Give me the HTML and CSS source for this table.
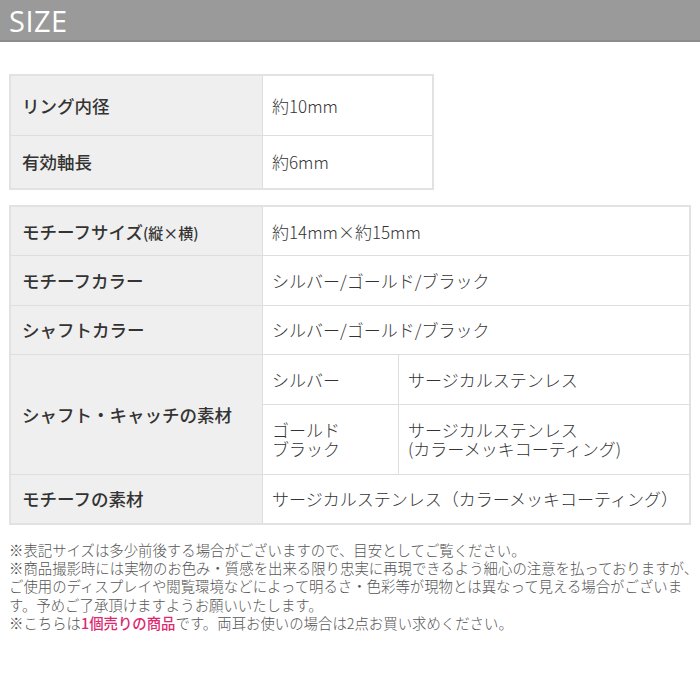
FILE: index.html
```html
<!DOCTYPE html>
<html lang="ja">
<head>
<meta charset="utf-8">
<link rel="stylesheet" href="styles.css">
</head>
<body>
<div class="header"><h1 class="title">SIZE</h1></div>
<div class="content">
  <table class="spec spec-small">
    <tr class="row-a"><th class="label">リング内径</th><td class="value">約10mm</td></tr>
    <tr class="row-b"><th class="label">有効軸長</th><td class="value">約6mm</td></tr>
  </table>
  <table class="spec spec-large">
    <tr class="row-std"><th class="label">モチーフサイズ<span class="small">(縦×横)</span></th><td class="value" colspan="2">約14mm×約15mm</td></tr>
    <tr class="row-std"><th class="label">モチーフカラー</th><td class="value" colspan="2">シルバー/ゴールド/ブラック</td></tr>
    <tr class="row-std"><th class="label">シャフトカラー</th><td class="value" colspan="2">シルバー/ゴールド/ブラック</td></tr>
    <tr class="row-std"><th class="label" rowspan="2">シャフト・キャッチの素材</th><td class="value sub">シルバー</td><td class="value">サージカルステンレス</td></tr>
    <tr class="row-tall"><td class="value sub">ゴールド<br>ブラック</td><td class="value">サージカルステンレス<br>(カラーメッキコーティング)</td></tr>
    <tr class="row-std"><th class="label">モチーフの素材</th><td class="value" colspan="2">サージカルステンレス（カラーメッキコーティング）</td></tr>
  </table>
  <div class="notes">
    <p class="note">※表記サイズは多少前後する場合がございますので、目安としてご覧ください。</p>
    <p class="note">※商品撮影時には実物のお色み・質感を出来る限り忠実に再現できるよう細心の注意を払っておりますが、<br>ご使用のディスプレイや閲覧環境などによって明るさ・色彩等が現物とは異なって見える場合がございま<br>す。予めご了承頂けますようお願いいたします。</p>
    <p class="note">※こちらは<strong class="accent">1個売りの商品</strong>です。両耳お使いの場合は2点お買い求めください。</p>
  </div>
</div>
</body>
</html>
```
FILE: styles.css
```css
html, body {
  margin: 0;
  padding: 0;
  background: #fff;
}
body {
  width: 700px;
  font-family: "Open Sans", "Noto Sans CJK JP", sans-serif;
  color: #333;
}
.header {
  height: 40px;
  background: #9a9a9a;
  border-bottom: 2px solid #8c8c8c;
  display: flex;
  align-items: center;
  padding-left: 9px;
}
.title {
  margin: 0;
  font-family: "Open Sans", sans-serif;
  font-weight: 400;
  font-size: 29px;
  color: #fff;
  letter-spacing: 0.5px;
  line-height: 1;
}
.content {
  padding: 32px 10px 0 9px;
}
.spec {
  border-collapse: collapse;
  border: 2px solid #e2e2e2;
}
.spec-small {
  width: 425px;
}
.spec-large {
  width: 682px;
  margin-top: 15px;
}
.spec th, .spec td {
  border: 1px solid #dedede;
  text-align: left;
  vertical-align: middle;
  padding: 0 0 0 9px;
}
.label {
  width: 240px;
  background: #efefef;
  font-family: "Noto Sans CJK JP", sans-serif;
  font-weight: 500;
  font-size: 17.5px;
  color: #333;
  padding-left: 11px !important;
  white-space: nowrap;
}
.small {
  font-size: 15px;
}
.value {
  font-family: "Noto Sans CJK JP", sans-serif;
  font-weight: 300;
  font-size: 17px;
  color: #333;
  line-height: 19px;
  white-space: nowrap;
}
.sub {
  width: 126px;
}
.row-a { height: 60px; }
.row-b { height: 54px; }
.row-std { height: 49.5px; }
.row-tall { height: 70px; }
.notes {
  margin-top: 16px;
}
.note {
  margin: 0;
  font-family: "Noto Sans CJK JP", sans-serif;
  font-weight: 300;
  font-size: 14.4px;
  line-height: 18.4px;
  color: #555;
  white-space: nowrap;
}
.accent {
  color: #dc2a70;
  font-weight: 500;
}
```
